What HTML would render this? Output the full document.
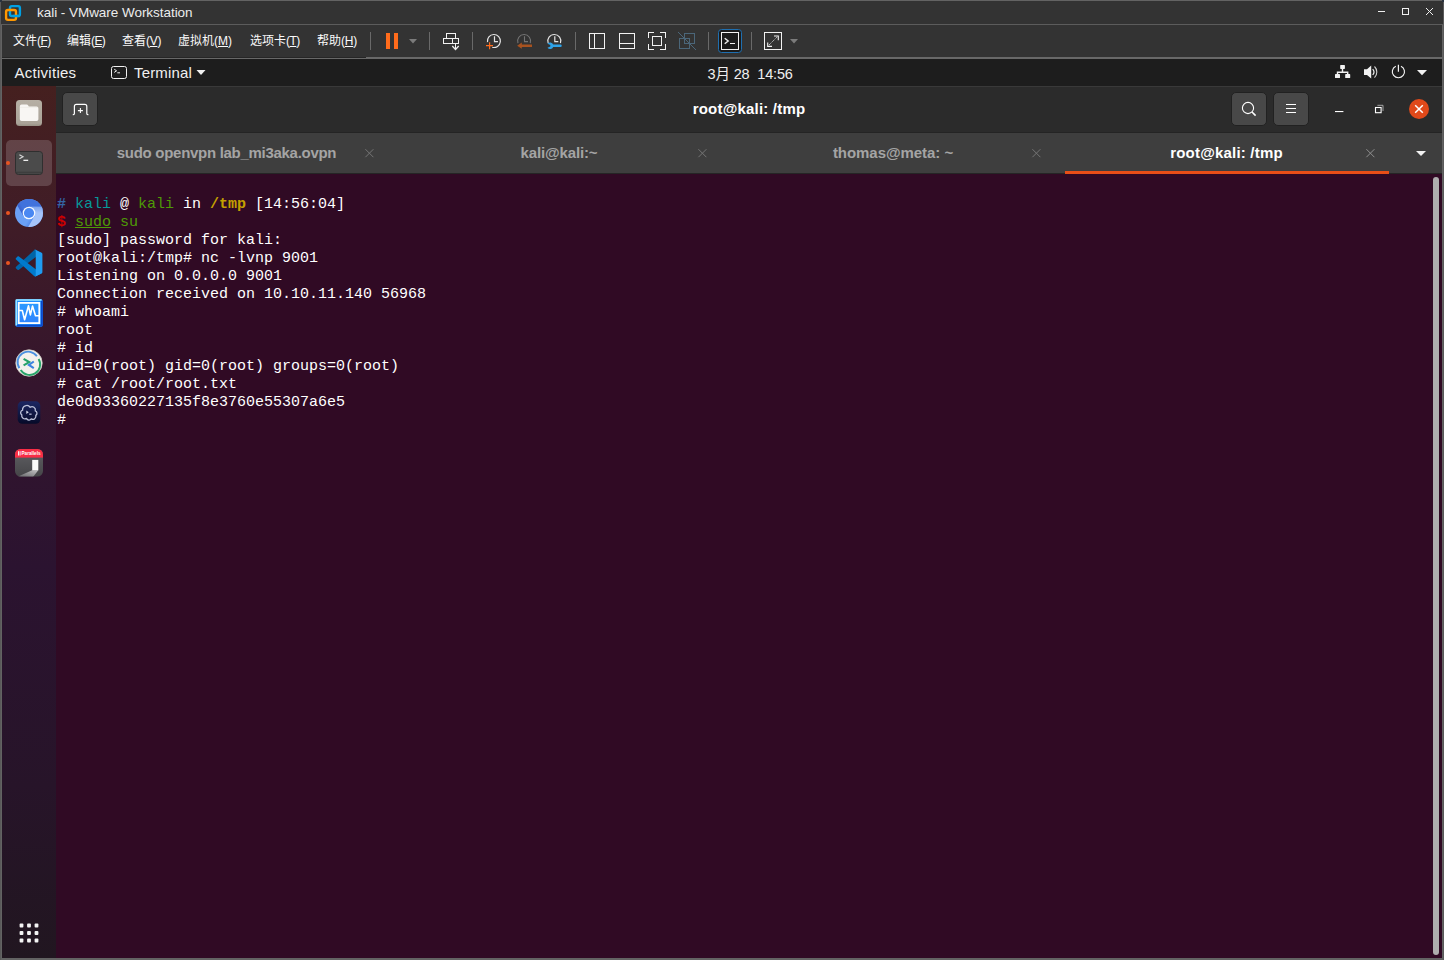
<!DOCTYPE html>
<html lang="zh">
<head>
<meta charset="utf-8">
<title>kali - VMware Workstation</title>
<style>
html,body{margin:0;padding:0;}
body{width:1444px;height:960px;overflow:hidden;background:#636363;position:relative;font-family:"Liberation Sans","Noto Sans CJK SC",sans-serif;color:#fff;}
.abs{position:absolute;}
.cj{font-family:"Liberation Sans","Noto Sans CJK SC",sans-serif;}
/* VMware chrome */
#vtitle{left:1px;top:1px;width:1442px;height:23px;background:#333333;}
#vtitle .t{left:36px;top:4px;letter-spacing:-0.04px;font-size:13.5px;line-height:16px;color:#ececec;white-space:nowrap;}
#vsep1{left:1px;top:24px;width:1442px;height:1px;background:#5c5c5c;}
#bl{left:0;top:0;width:1px;height:960px;background:#5a5a5a;}
#br{left:1443px;top:0;width:1px;height:960px;background:#5a5a5a;}
.corner{width:2px;height:2px;background:#2a3340;top:0;}
#vmenu{left:2px;top:25px;width:1440px;height:32px;background:#333333;}
#vsep2{left:2px;top:57px;width:1440px;height:2px;background:#686868;}
#vsep2b{left:2px;top:57px;width:364px;height:1px;background:#262626;}
.mi{top:8px;font-size:12px;line-height:16px;color:#fafafa;white-space:nowrap;}
.mi u{text-decoration-thickness:1px;text-underline-offset:1px;}
.tsep{top:7px;width:1px;height:18px;background:#5c5c5c;}
/* GNOME */
#gtop{left:2px;top:59px;width:1440px;height:27px;background:#1d1d1d;}
#gtop .txt{font-size:15px;line-height:18px;color:#f0f0f0;white-space:nowrap;top:5px;}
#dock{left:2px;top:86px;width:54px;height:872px;background:linear-gradient(to bottom,#45201f 0px,#411d26 120px,#34152d 300px,#2b1330 480px,#271429 700px,#211620 872px);}
/* terminal window */
#thead{left:56px;top:86px;width:1386px;height:46px;background:#2b2b2b;}
#thead .title{left:0;width:1386px;top:13.5px;letter-spacing:0.2px;text-align:center;font-weight:bold;font-size:15px;line-height:18px;color:#fff;}
.hbtn{background:#464646;border-radius:5px;border:1px solid #262626;box-sizing:border-box;}
#thl{left:56px;top:86px;width:1386px;height:1px;background:#393939;}
#tline{left:56px;top:132px;width:1386px;height:1px;background:#242424;}
#tabs{left:56px;top:133px;width:1386px;height:40px;background:#3e3e3e;}
#tline2{left:56px;top:173px;width:1386px;height:1px;background:#252525;}
.tab{top:10.5px;font-weight:bold;font-size:15px;line-height:18px;color:#a4a4a4;white-space:nowrap;transform:translateX(-50%);}
.tab.act{color:#fff;}
.tx{top:14px;width:9px;height:9px;}
#term{left:56px;top:174px;width:1386px;height:784px;background:#300a24;}
#term pre{margin:0;position:absolute;left:1px;top:4px;font-family:"Liberation Mono",monospace;font-size:15px;line-height:18px;color:#fff;}
.c-b{color:#3465a4;font-weight:bold;}
.c-c{color:#06989a;}
.c-g{color:#4e9a06;}
.c-y{color:#c4a000;font-weight:bold;}
.c-r{color:#cc0000;font-weight:bold;}
#sbar{left:1433px;top:177px;width:6px;height:778px;border-radius:3px;background:#aeaeae;}
</style>
</head>
<body>

<div id="vtitle" class="abs"><div class="t abs">kali - VMware Workstation</div></div>
<div id="vsep1" class="abs"></div><div id="bl" class="abs"></div><div id="br" class="abs"></div><div class="corner abs" style="left:0"></div><div class="corner abs" style="left:1442px"></div>
<div id="vmenu" class="abs">
<div class="mi abs" style="left:11px"><span class="cj">文件</span><span style="letter-spacing:-0.6px">(<u>F</u>)</span></div>
<div class="mi abs" style="left:65px"><span class="cj">编辑</span><span style="letter-spacing:-0.6px">(<u>E</u>)</span></div>
<div class="mi abs" style="left:120px"><span class="cj">查看</span><span style="letter-spacing:-0.3px">(<u>V</u>)</span></div>
<div class="mi abs" style="left:176px"><span class="cj">虚拟机</span><span style="letter-spacing:0px">(<u>M</u>)</span></div>
<div class="mi abs" style="left:248px"><span class="cj">选项卡</span><span style="letter-spacing:-0.5px">(<u>T</u>)</span></div>
<div class="mi abs" style="left:315px"><span class="cj">帮助</span><span style="letter-spacing:-0.2px">(<u>H</u>)</span></div>
</div>
<div id="vsep2" class="abs"></div><div id="vsep2b" class="abs"></div>
<div id="gtop" class="abs">
<div class="txt abs" style="left:12.5px;letter-spacing:0.27px">Activities</div>
<div class="txt abs" style="left:132px;letter-spacing:0.15px">Terminal</div>
<div class="txt abs" style="left:705.5px;top:6px;font-size:14.5px;letter-spacing:-0.15px">3<span class="cj">月</span> 28&nbsp; 14:56</div>
</div>
<div id="dock" class="abs"></div>
<div id="thead" class="abs">
<div class="title abs">root@kali: /tmp</div>
</div>
<div id="thl" class="abs"></div><div id="tline" class="abs"></div>
<div id="tabs" class="abs">
<div class="tab abs" style="left:170.5px;letter-spacing:-0.29px">sudo openvpn lab_mi3aka.ovpn</div>
<div class="tab abs" style="left:503px;letter-spacing:-0.13px">kali@kali:~</div>
<div class="tab abs" style="left:837px;letter-spacing:-0.05px">thomas@meta: ~</div>
<div class="tab act abs" style="left:1170.5px;letter-spacing:0.2px">root@kali: /tmp</div>
</div>
<div id="tline2" class="abs"></div>
<div class="abs" style="left:1065px;top:171px;width:324px;height:3px;background:#e84e17"></div>
<div id="term" class="abs"><pre>

<span class="c-b">#</span> <span class="c-c">kali</span> @ <span class="c-g">kali</span> in <span class="c-y">/tmp</span> [14:56:04]
<span class="c-r">$</span> <span class="c-g"><u>sudo</u> su</span>
[sudo] password for kali: 
root@kali:/tmp# nc -lvnp 9001
Listening on 0.0.0.0 9001
Connection received on 10.10.11.140 56968
# whoami
root
# id
uid=0(root) gid=0(root) groups=0(root)
# cat /root/root.txt
de0d93360227135f8e3760e55307a6e5
# </pre></div>
<div id="sbar" class="abs"></div>
<svg id="ov" class="abs" style="left:0;top:0" width="1444" height="960" viewBox="0 0 1444 960" fill="none">
<!-- VMware logo -->
<g stroke-width="2.4" stroke-linejoin="round">
<rect x="10" y="6.1" width="9.9" height="9.9" rx="1.8" stroke="#00a1e4"/>
<rect x="6.1" y="10" width="9.9" height="9.9" rx="1.8" stroke="#ff9800"/>
<path d="M10 13.5V8A1.8 1.8 0 0 1 11.8 6.1H14" stroke="#00a1e4" stroke-linecap="butt" opacity="0"/>
<path d="M13 16H19.9" stroke="#00a1e4"/>
</g>
<!-- window controls -->
<g shape-rendering="crispEdges" fill="#f0f0f0">
<rect x="1378" y="11" width="7" height="1"/>
<rect x="1402.5" y="8.5" width="6" height="6" fill="none" stroke="#f0f0f0"/>
</g>
<path d="M1426 8L1433 15M1433 8L1426 15" stroke="#f0f0f0" stroke-width="1"/>
<!-- toolbar separators -->
<g fill="#696969" shape-rendering="crispEdges">
<rect x="370" y="32" width="1" height="18"/><rect x="429" y="32" width="1" height="18"/><rect x="472" y="32" width="1" height="18"/>
<rect x="575" y="32" width="1" height="18"/><rect x="708" y="32" width="1" height="18"/><rect x="751" y="32" width="1" height="18"/>
</g>
<!-- pause -->
<g fill="#ff6c1c" shape-rendering="crispEdges"><rect x="386" y="33" width="4" height="16"/><rect x="394" y="33" width="4" height="16"/></g>
<path d="M409 39H417L413 43.5Z" fill="#7b7b7b"/>
<path d="M790 39H798L794 43.5Z" fill="#7b7b7b"/>
<!-- send cad -->
<g stroke="#f2f2f2" stroke-width="1" shape-rendering="crispEdges">
<rect x="446.5" y="33.5" width="9" height="5"/>
<rect x="443.5" y="38.5" width="15" height="5"/>
<path d="M452.5 38.5V43.5M455.5 44V49"/>
</g>
<path d="M452.3 46L455.5 49.5L458.7 46" stroke="#f2f2f2" stroke-width="1.2"/>
<!-- snapshot clocks -->
<g stroke="#e4e4e4" stroke-width="1.2">
<path d="M487.5 42.13A6.5 6.5 0 1 1 492.22 47.28"/>
<path d="M494.5 36.3V41.6H498"/>
<path d="M548.15 43.1A6.5 6.5 0 1 1 560.45 43.1"/>
<path d="M554.8 36.3V41.6H558.3"/>
</g>
<path d="M486 45.7H493M489.6 42.2V49.2" stroke="#ff6c1c" stroke-width="1.2"/>
<g stroke="#747474" stroke-width="1.1">
<path d="M517.95 43.1A6.5 6.5 0 1 1 530.25 43.1"/>
<path d="M524.5 36.3V41.6H528"/>
</g>
<path d="M517.2 45.7L521.8 42.6V44.5H532V46.9H521.8V48.8Z" fill="#a8521f"/>
<path d="M547.5 43.7L550.3 44.9V46.5L547.5 47.7A3.3 3.3 0 0 0 553.2 47H560.5A1.25 1.25 0 0 0 560.5 44.5H553.2A3.3 3.3 0 0 0 547.5 43.7Z" fill="#2ea3e8"/>
<!-- layout icons -->
<g stroke="#f2f2f2" stroke-width="1" shape-rendering="crispEdges">
<rect x="589.5" y="33.5" width="15" height="15"/><path d="M594.5 33.5V48.5"/>
<rect x="619.5" y="33.5" width="15" height="15"/><path d="M619.5 43.5H634.5"/>
<rect x="652.5" y="36.5" width="9" height="9"/>
<path d="M648.5 38V32.5H654M660 32.5H665.5V38M665.5 44V49.5H660M654 49.5H648.5V44"/>
</g>
<g stroke="#4b6679" stroke-width="1">
<rect x="684.5" y="33.5" width="10" height="10" shape-rendering="crispEdges"/>
<rect x="679.5" y="38.5" width="10" height="10" shape-rendering="crispEdges"/>
<path d="M678 32L696 50"/>
</g>
<!-- console button -->
<rect x="718.5" y="29.5" width="23" height="23" rx="3" fill="#1b1b1b" stroke="#1f6fb0"/>
<rect x="721.5" y="32.5" width="17" height="17" stroke="#f2f2f2" shape-rendering="crispEdges"/>
<path d="M724.7 38.2L728.2 41L724.7 43.8" stroke="#f2f2f2" stroke-width="1.4"/>
<path d="M730 43.5H735" stroke="#f2f2f2" stroke-width="1"/>
<!-- fullscreen -->
<rect x="764.5" y="32.5" width="17" height="17" stroke="#f2f2f2" shape-rendering="crispEdges"/>
<path d="M774 36H778.3V40.2M767.7 42.4V46.4H772" stroke="#f2f2f2" stroke-width="1.1"/>
<path d="M769 45L777.3 36.8" stroke="#d0d0d0" stroke-width="1" stroke-dasharray="1.2 0.8"/>
<!-- GNOME: terminal icon -->
<rect x="111.5" y="66.5" width="15" height="12" rx="2" stroke="#f0f0f0"/>
<path d="M114.2 69.2L116.6 70.8L114.2 72.4" stroke="#f0f0f0" stroke-width="1"/>
<path d="M117.3 72.8H120" stroke="#f0f0f0" stroke-width="1"/>
<path d="M196.5 70H205.5L201 75Z" fill="#f0f0f0"/>
<!-- network -->
<g fill="#f2f2f2">
<rect x="1340.2" y="65" width="4.7" height="3.9" rx="0.6"/>
<rect x="1335" y="74.1" width="5" height="3.9" rx="0.6"/>
<rect x="1345.2" y="74.1" width="5" height="3.9" rx="0.6"/>
</g>
<path d="M1342.5 68.5V72.2M1337.5 74.5V72.2H1347.7V74.5" stroke="#f2f2f2" stroke-width="1.4"/>
<!-- volume -->
<path d="M1364 69.2H1367L1371.2 65.6V78.6L1367 75H1364Z" fill="#f2f2f2"/>
<path d="M1372.7 69.2A4.2 4.2 0 0 1 1372.7 74.9" stroke="#f2f2f2" stroke-width="1.2"/>
<path d="M1374.5 66.5A7.8 7.8 0 0 1 1374.5 77.6" stroke="#d2d2d2" stroke-width="1.1"/>
<!-- power -->
<path d="M1395.82 66.17A6.1 6.1 0 1 0 1400.98 66.17" stroke="#f2f2f2" stroke-width="1.15"/>
<path d="M1398.4 64.8V71.7" stroke="#f2f2f2" stroke-width="1.2"/>
<path d="M1417 70H1427L1422 75.2Z" fill="#f2f2f2"/>
<!-- headerbar buttons -->
<g fill="#484848" stroke="#212121" stroke-width="1">
<rect x="62.5" y="92.5" width="35" height="33" rx="4.5"/>
<rect x="1231.5" y="92.5" width="35" height="33" rx="4.5"/>
<rect x="1273.5" y="92.5" width="35" height="33" rx="4.5"/>
</g>
<path d="M72.8 114.6H73.4A1 1 0 0 0 74.4 113.6V106.4A2 2 0 0 1 76.4 104.4H84.8A2 2 0 0 1 86.8 106.4V113.6A1 1 0 0 0 87.8 114.6H88.4" stroke="#fff" stroke-width="1.2"/>
<path d="M77.9 110.6H82.9M80.4 108.1V113.1" stroke="#fff" stroke-width="1.1"/>
<circle cx="1248" cy="108" r="5.6" stroke="#fff" stroke-width="1.1"/>
<path d="M1252 112L1255.6 115.6" stroke="#fff" stroke-width="1.6"/>
<g fill="#fff" shape-rendering="crispEdges"><rect x="1286" y="104" width="10" height="1"/><rect x="1286" y="108" width="10" height="1"/><rect x="1286" y="112" width="10" height="1"/></g>
<rect x="1335" y="111" width="8.4" height="1.1" fill="#fff"/>
<rect x="1375.5" y="107.5" width="5.6" height="5.2" stroke="#fff" stroke-width="1.1"/>
<path d="M1377.4 105.3H1383V111" stroke="#b0b0b0" stroke-width="0.9"/>
<circle cx="1419" cy="109" r="10" fill="#e0491a"/>
<path d="M1415.2 105.2L1422.8 112.8M1422.8 105.2L1415.2 112.8" stroke="#fff" stroke-width="1.5"/>
<!-- tab close x -->
<g stroke="#757575" stroke-width="1">
<path d="M365.4 149.2L373.4 157.2M373.4 149.2L365.4 157.2"/>
<path d="M698.4 149.2L706.4 157.2M706.4 149.2L698.4 157.2"/>
<path d="M1032.4 149.2L1040.4 157.2M1040.4 149.2L1032.4 157.2"/>
</g>
<path d="M1366.4 149.2L1374.4 157.2M1374.4 149.2L1366.4 157.2" stroke="#909090" stroke-width="1"/>
<path d="M1416 151H1426L1421 156Z" fill="#f2f2f2"/>
<!-- dock: files -->
<defs>
<linearGradient id="gFiles" x1="0" y1="0" x2="0" y2="1"><stop offset="0" stop-color="#b6afa4"/><stop offset="0.9" stop-color="#aaa398"/><stop offset="1" stop-color="#979084"/></linearGradient>
<linearGradient id="gWs" x1="0" y1="0" x2="0" y2="1"><stop offset="0" stop-color="#2a9aff"/><stop offset="1" stop-color="#2f84ff"/></linearGradient>
<linearGradient id="gTm" x1="0" y1="0" x2="0" y2="1"><stop offset="0" stop-color="#1c2763"/><stop offset="1" stop-color="#060a28"/></linearGradient>
<linearGradient id="gPl" x1="0" y1="0" x2="0" y2="1"><stop offset="0" stop-color="#606064"/><stop offset="1" stop-color="#454548"/></linearGradient>
<linearGradient id="gBeam" x1="1" y1="0" x2="0" y2="1"><stop offset="0" stop-color="#e8e8e8"/><stop offset="1" stop-color="#6a6a6e"/></linearGradient>
<clipPath id="cpPl"><rect x="15" y="449" width="28" height="27.5" rx="5.5"/></clipPath>
<linearGradient id="gChD" gradientUnits="userSpaceOnUse" x1="17" y1="209" x2="22" y2="206"><stop offset="0" stop-color="#3558c4"/><stop offset="1" stop-color="#4172dc"/></linearGradient>
<linearGradient id="gChL" gradientUnits="userSpaceOnUse" x1="0" y1="206.7" x2="0" y2="213"><stop offset="0" stop-color="#7ea5ee"/><stop offset="1" stop-color="#a6c4fa"/></linearGradient>
<linearGradient id="gChM" gradientUnits="userSpaceOnUse" x1="27" y1="222" x2="31" y2="224.5"><stop offset="0" stop-color="#6aa0f6"/><stop offset="1" stop-color="#4f86ea"/></linearGradient>
<clipPath id="cpCh"><circle cx="29" cy="213" r="14"/></clipPath>
</defs>
<rect x="16" y="100" width="26" height="26" rx="3.5" fill="url(#gFiles)"/>
<path d="M19.8 106.4A1.8 1.8 0 0 1 21.6 104.6H26.6A1.8 1.8 0 0 1 28.2 105.6L28.8 106.6H36.6A1.8 1.8 0 0 1 38.4 108.4V119.2A1.8 1.8 0 0 1 36.6 121H21.6A1.8 1.8 0 0 1 19.8 119.2Z" fill="#f8f6f3"/>
<path d="M19.8 107.4H38.4" stroke="#e4e0d8" stroke-width="0.6" opacity="0.6"/>
<!-- dock: terminal -->
<rect x="6" y="140" width="46" height="46" rx="5" fill="#fff" fill-opacity="0.17"/>
<rect x="15.5" y="151.5" width="27" height="23" rx="3" fill="#4b4b4b" stroke="#2f2f2f"/>
<path d="M16 172.5H42" stroke="#333" stroke-width="1.5" opacity="0.6"/>
<path d="M19.4 154.8L23 156.8L19.4 158.8" stroke="#d6d6d6" stroke-width="1.2"/>
<rect x="23.4" y="159.7" width="4.8" height="1.2" fill="#fff"/>
<g fill="#e95420"><circle cx="8" cy="163" r="2"/><circle cx="8" cy="213" r="2"/><circle cx="8" cy="263" r="2"/></g>
<!-- dock: chromium -->
<g clip-path="url(#cpCh)">
<rect x="15" y="199" width="28" height="28" fill="url(#gChM)"/>
<path d="M23.54 216.15L8.5 190.2V180H60V206.7H29L29 213Z" fill="url(#gChD)"/>
<path d="M29 206.7H60V240L19.46 242.1L34.46 216.15L29 213Z" fill="url(#gChL)"/>
</g>
<circle cx="29" cy="213" r="6.3" fill="#f6f9ff"/>
<circle cx="29" cy="213" r="5.1" fill="#4a88f2"/>
<!-- dock: vscode -->
<g transform="translate(15.7,249.8) scale(0.267)">
<path d="M96.46 10.8L75.86 0.88C73.47-0.27 70.62 0.21 68.75 2.08L1.3 63.58C-0.52 65.24-0.51 68.09 1.3 69.75L6.81 74.75C8.3 76.1 10.53 76.2 12.13 74.99L93.36 13.37C96.09 11.3 100 13.25 100 16.67V16.43C100 14.03 98.62 11.84 96.46 10.8Z" fill="#0065a9"/>
<path d="M96.46 89.2L75.86 99.12C73.47 100.27 70.62 99.79 68.75 97.92L1.3 36.42C-0.52 34.76-0.51 31.91 1.3 30.25L6.81 25.25C8.3 23.9 10.53 23.8 12.13 25.01L93.36 86.63C96.09 88.7 100 86.75 100 83.33V83.57C100 85.97 98.62 88.16 96.46 89.2Z" fill="#007acc"/>
<path d="M75.86 99.13C73.47 100.27 70.62 99.79 68.75 97.92C71.06 100.22 75 98.59 75 95.33V4.67C75 1.41 71.06-0.22 68.75 2.08C70.62 0.21 73.47-0.27 75.86 0.87L96.46 10.78C98.62 11.82 100 14.01 100 16.41V83.59C100 85.99 98.62 88.18 96.46 89.22L75.86 99.13Z" fill="#1f9cf0"/>
</g>
<!-- dock: wireshark-ish -->
<rect x="15.3" y="299" width="27.5" height="27.8" rx="2.6" fill="#1d8cff"/>
<path d="M16.2 325.6H41.8V300.4" stroke="#0b49cc" stroke-width="1.9" stroke-linejoin="round"/>
<path d="M16.3 325.4V300H41.6" stroke="#9be6ff" stroke-width="1.5" stroke-linejoin="round"/>
<rect x="18.7" y="302.9" width="20.6" height="20.2" fill="url(#gWs)" stroke="#fff" stroke-width="1.8"/>
<path d="M18.8 310.5H22.3L24.6 319.8L28.5 305.8L30.4 314.9L32.5 306.1L35.5 315.8H39.4" stroke="#fff" stroke-width="1.6" stroke-linejoin="round"/>
<!-- dock: remmina-ish -->
<circle cx="29" cy="363" r="13.2" fill="#f3f1ec" stroke="#cfccc4" stroke-width="0.8"/>
<path d="M19.4 368.1A10.4 10.4 0 0 1 36.9 356.3" stroke="#4a90e0" stroke-width="1.9"/>
<path d="M38.6 359A10.4 10.4 0 0 1 20.7 369.9" stroke="#2aa56b" stroke-width="1.9"/>
<path d="M23.6 358.8L29.2 362.1L23.6 365.3" stroke="#26a269" stroke-width="2.1"/>
<path d="M33.8 361.5L28.9 364.9L33.8 368.2" stroke="#3b82e0" stroke-width="2.1"/>
<!-- dock: termius-ish -->
<rect x="17.7" y="401.3" width="22.6" height="22.5" rx="4.6" fill="url(#gTm)"/>
<path d="M22.6 410.2A4.2 4.2 0 0 1 30.2 407.3A3.3 3.3 0 0 1 35.3 410.8A2.6 2.6 0 0 1 35.8 415.4A3.1 3.1 0 0 1 31.2 418.9A2.6 2.6 0 0 1 26.6 418.4A3.2 3.2 0 0 1 21.8 414.9A2.6 2.6 0 0 1 22.6 410.2Z" stroke="#bcc1da" stroke-width="1.3" stroke-linejoin="round"/>
<path d="M26.3 410.5L28.8 412.3L26.3 413.9Z" fill="#d4d8e8"/>
<rect x="29.2" y="413.5" width="2.4" height="1.4" fill="#a2a8c6"/>
<!-- dock: parallels-ish -->
<g clip-path="url(#cpPl)">
<rect x="15" y="449" width="28" height="28" fill="url(#gPl)"/>
<path d="M32.2 470.3H38.3L33 477H17Z" fill="url(#gBeam)" opacity="0.75"/>
<rect x="32.2" y="459.9" width="6.1" height="10.4" fill="#fafafa"/>
<rect x="15" y="449" width="28" height="8.6" fill="#fa2d46"/>
</g>
<rect x="18" y="451.2" width="0.9" height="4.3" fill="#fff"/><rect x="19.6" y="451.2" width="0.9" height="4.3" fill="#fff"/>
<text x="21.5" y="455.3" font-family="Liberation Sans, sans-serif" font-size="4.9" font-weight="bold" fill="#fff" textLength="19" lengthAdjust="spacingAndGlyphs">Parallels</text>
<!-- show apps -->
<g fill="#f4f4f4">
<rect x="19.6" y="923.6" width="3.8" height="3.8" rx="0.9"/><rect x="27.1" y="923.6" width="3.8" height="3.8" rx="0.9"/><rect x="34.6" y="923.6" width="3.8" height="3.8" rx="0.9"/>
<rect x="19.6" y="931.1" width="3.8" height="3.8" rx="0.9"/><rect x="27.1" y="931.1" width="3.8" height="3.8" rx="0.9"/><rect x="34.6" y="931.1" width="3.8" height="3.8" rx="0.9"/>
<rect x="19.6" y="938.6" width="3.8" height="3.8" rx="0.9"/><rect x="27.1" y="938.6" width="3.8" height="3.8" rx="0.9"/><rect x="34.6" y="938.6" width="3.8" height="3.8" rx="0.9"/>
</g>

</svg>

</body>
</html>
